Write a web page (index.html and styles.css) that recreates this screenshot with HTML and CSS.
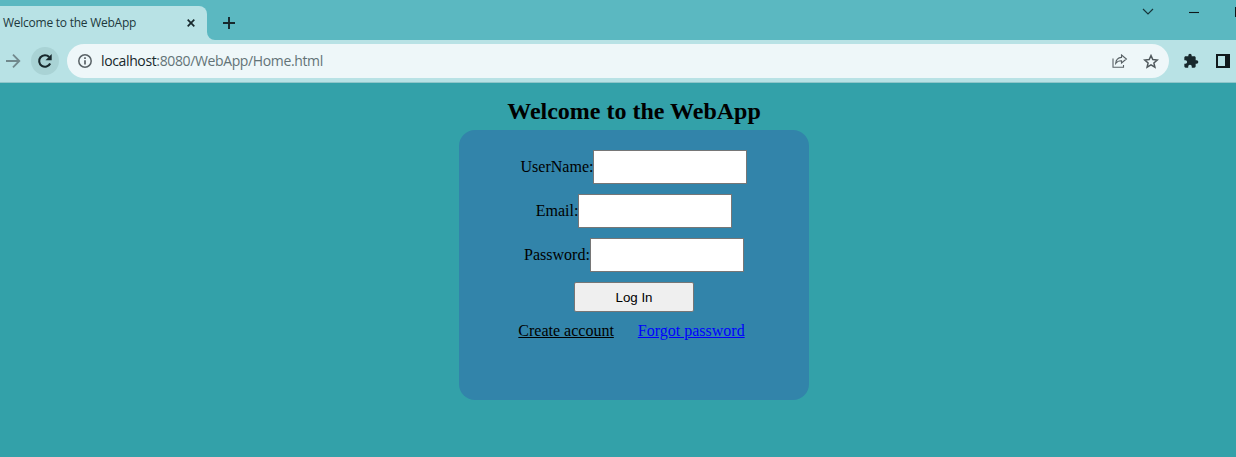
FILE: index.html
```html
<!DOCTYPE html>
<html lang="en">
<head>
<meta charset="utf-8">
<title>Welcome to the WebApp</title>
<link rel="stylesheet" href="styles.css">
</head>
<body>
<header class="tabstrip">
  <div class="tab">
    <span class="tab-title">Welcome to the WebApp</span>
    <svg class="tab-close" width="8" height="8" viewBox="0 0 8 8"><path d="M.7.7l6.6 6.6M7.3.7L.7 7.3" stroke="#17282c" stroke-width="1.7"/></svg>
  </div>
  <svg class="tab-foot" width="8" height="8" viewBox="0 0 8 8"><path d="M0 0a8 8 0 0 0 8 8H0z" fill="#b8e2e5"/></svg>
  <svg class="new-tab" width="12" height="12" viewBox="0 0 12 12"><path d="M6 0v12M0 6h12" stroke="#17282c" stroke-width="1.9"/></svg>
  <div class="window-controls">
    <svg width="12" height="8" viewBox="0 0 12 8"><path d="M1 1l5 5 5-5" fill="none" stroke="#17353a" stroke-width="1.2"/></svg>
    <svg class="minimize" width="10" height="8" viewBox="0 0 10 8"><path d="M0 4.5h10" stroke="#10181a" stroke-width="1.1"/></svg>
    <svg class="maximize" width="1" height="10" viewBox="0 0 1 10"><path d="M0 0h1v10H0z" fill="#10181a"/></svg>
  </div>
</header>
<nav class="toolbar">
  <svg class="forward" width="16" height="16" viewBox="0 0 16 16"><path d="M1 8h13M8 1.7L14.3 8 8 14.3" fill="none" stroke="#71898d" stroke-width="1.8"/></svg>
  <div class="reload">
    <svg width="16" height="16" viewBox="0 0 16 16"><path d="M13.2 10.500A5.800 5.800 0 1 1 12.2 4" fill="none" stroke="#17282c" stroke-width="2.1"/><path d="M14.700 1v6.200H8.500z" fill="#17282c"/></svg>
  </div>
  <div class="omnibox">
    <svg width="14" height="14" viewBox="0 0 14 14"><circle cx="7" cy="7" r="6.2" fill="none" stroke="#596266" stroke-width="1.5"/><path d="M7 6.200v4.400M7 3.300v1.600" stroke="#596266" stroke-width="1.7"/></svg>
    <span class="url"><span class="host">localhost</span>:8080/WebApp/Home.html</span>
    <svg class="share" width="16" height="14" viewBox="0 0 16 14"><path d="M1 4.500v8.700h10.500V11M9.500 1l4.900 4-4.900 4V6.700C7 6.600 5 7.600 3.700 9.400 4 6 6.500 3.700 9.500 3.400z" fill="none" stroke="#596266" stroke-width="1.1"/></svg>
    <svg width="16" height="15" viewBox="0 0 16 15"><path d="M8 1.600l1.800 4 4.400.4-3.300 2.900 1 4.300L8 10.900l-3.900 2.300 1-4.300L1.800 6l4.400-.4z" fill="none" stroke="#50595d" stroke-width="1.5"/></svg>
  </div>
  <svg class="extensions" width="16" height="16" viewBox="0 0 24 24"><path d="M20.500 11H19V7c0-1.100-.9-2-2-2h-4V3.500a2.500 2.500 0 0 0-5 0V5H4c-1.100 0-2 .9-2 2v3.800h1.500a2.700 2.700 0 0 1 0 5.400H2V20c0 1.100.9 2 2 2h3.800v-1.500a2.700 2.700 0 0 1 5.400 0V22H17c1.100 0 2-.9 2-2v-4h1.500a2.500 2.500 0 0 0 0-5z" fill="#17282c"/></svg>
  <svg class="side-panel" width="14" height="14" viewBox="0 0 14 14"><path d="M0 0h14v14H0zM2 2v10h7V2z" fill="#10191c" fill-rule="evenodd"/></svg>
</nav>
<main class="page">
  <h1 class="heading">Welcome to the WebApp</h1>
  <form class="card">
    <label class="field">UserName:<input class="input" type="text"></label>
    <label class="field">Email:<input class="input" type="text"></label>
    <label class="field">Password:<input class="input" type="password"></label>
    <button class="login" type="button">Log In</button>
    <div class="links"><a class="create" href="#">Create account</a><a class="forgot" href="#">Forgot password</a></div>
  </form>
</main>
</body>
</html>
```
FILE: styles.css
```css
* { box-sizing: border-box; }
body {
  margin: 0;
  height: 457px;
  display: flex;
  flex-direction: column;
  overflow: hidden;
  background: #33a1a9;
  font-family: "Liberation Serif", serif;
}
svg { display: block; flex: none; }
.tabstrip {
  height: 40px;
  flex: none;
  display: flex;
  align-items: flex-end;
  background: #5bb8c1;
}
.tab {
  width: 207px;
  height: 34px;
  padding: 0 12px 0 3px;
  display: flex;
  align-items: center;
  justify-content: space-between;
  background: #b8e2e5;
  border-top-right-radius: 8px;
  font: 12px/34px "Open Sans", sans-serif;
  color: #20383c;
}
.tab-title { white-space: nowrap; letter-spacing: -0.25px; }
.new-tab { margin: 0 0 11px 8px; }
.window-controls {
  align-self: flex-start;
  display: flex;
  margin: 8px 0 0 auto;
}
.minimize { margin-left: 35px; }
.maximize { margin: -1px 0 0 36px; }
.toolbar {
  height: 43px;
  flex: none;
  display: flex;
  align-items: center;
  padding: 0 6px 0 5px;
  background: #b8e2e5;
  border-bottom: 1px solid #8fc6ca;
}
.reload {
  width: 28px;
  height: 28px;
  margin-left: 10px;
  display: flex;
  align-items: center;
  justify-content: center;
  border-radius: 50%;
  background: #a9d3d5;
}
.omnibox {
  width: 1102px;
  height: 34px;
  margin-left: 8px;
  padding: 0 10px 0 11px;
  display: flex;
  align-items: center;
  border-radius: 17px;
  background: #eef7f9;
}
.url {
  margin-left: 9px;
  font: 14px/20px "Open Sans", sans-serif;
  letter-spacing: -0.37px;
  color: #637377;
}
.host { color: #17282c; }
.share { margin: 0 15px 0 auto; }
.extensions { margin-left: 14px; }
.side-panel { margin-left: auto; }
.page {
  flex: 1;
  display: flex;
  flex-direction: column;
  align-items: center;
  padding: 14px 0 0 32px;
}
.heading {
  margin: 0;
  height: 33px;
  font-size: 24px;
  line-height: 28px;
  white-space: nowrap;
}
.card {
  width: 350px;
  height: 270px;
  padding-top: 20px;
  display: flex;
  flex-direction: column;
  align-items: center;
  gap: 10px;
  border-radius: 16px;
  background: #3284aa;
  font-size: 16px;
}
.field { display: flex; align-items: center; line-height: 34px; }
.input {
  width: 154px;
  height: 34px;
  margin: 0;
  padding: 0;
  border: 1px solid #767676;
  background: #fff;
}
.login {
  width: 120px;
  height: 30px;
  padding: 0;
  border: 1px solid #767676;
  border-radius: 2px;
  background: #efefef;
  color: #000;
  font: 13.333px "Liberation Sans", sans-serif;
}
.links { display: flex; gap: 24px; line-height: 18px; margin-right: 5px; }
.create { color: #000; }
.forgot { color: #00f; }
```
